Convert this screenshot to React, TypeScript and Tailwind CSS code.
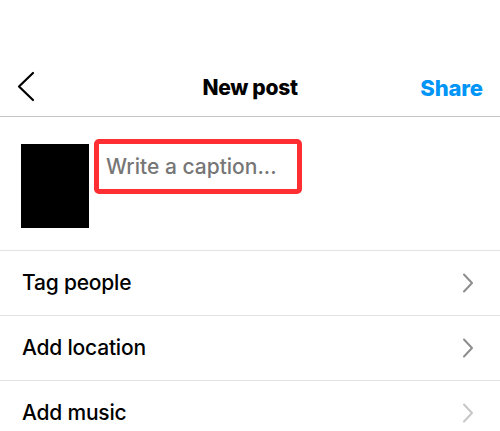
import React from "react";

const font = { fontFamily: "Inter, 'Noto Sans', sans-serif" };

function Row({ label, light }: { label: string; light?: boolean }) {
  return (
    <div className="flex h-[65px] items-center justify-between border-b border-[#e3e3e3] pl-[22px] pr-[26px]">
      <span className="text-[21px] font-medium text-black tracking-[-0.2px]">{label}</span>
      <svg width="12" height="20" viewBox="0 0 12 20" fill="none">
        <path
          d="M2 1.5 L10 10 L2 18.5"
          stroke={light ? "#c7c7c7" : "#8e8e8e"}
          strokeWidth="2"
          strokeLinecap="round"
          strokeLinejoin="round"
        />
      </svg>
    </div>
  );
}

export default function App() {
  return (
    <div className="w-[500px] h-[431px] overflow-hidden bg-white" style={font}>
      <div className="h-[60px]" />
      <div className="grid h-[57px] grid-cols-[1fr_auto_1fr] items-center border-b border-[#c6c6c6] pl-[17px] pr-[17px]">
        <svg width="18" height="32" viewBox="0 0 18 32" fill="none" className="mt-[-2px]">
          <path d="M16 2 L2 15.5 L16 29" stroke="#000" strokeWidth="2.2" strokeLinecap="round" strokeLinejoin="round" />
        </svg>
        <span className="text-[21px] font-extrabold text-black tracking-[-0.3px]">New post</span>
        <span className="justify-self-end text-[22px] font-extrabold text-[#0095f6] tracking-[-0.1px]">Share</span>
      </div>
      <div className="flex h-[134px] items-start border-b border-[#e3e3e3] pl-[21px] pt-[22px]">
        <div className="mt-[5px] h-[84px] w-[68px] bg-black" />
        <div className="ml-[5px] flex h-[55px] w-[208px] items-center rounded-[5px] border-[5px] border-[#ff2e33] pl-[7px]">
          <span className="text-[21px] font-medium text-[#767676] tracking-[0px]">Write a caption...</span>
        </div>
      </div>
      <Row label="Tag people" />
      <Row label="Add location" />
      <Row label="Add music" light />
    </div>
  );
}
